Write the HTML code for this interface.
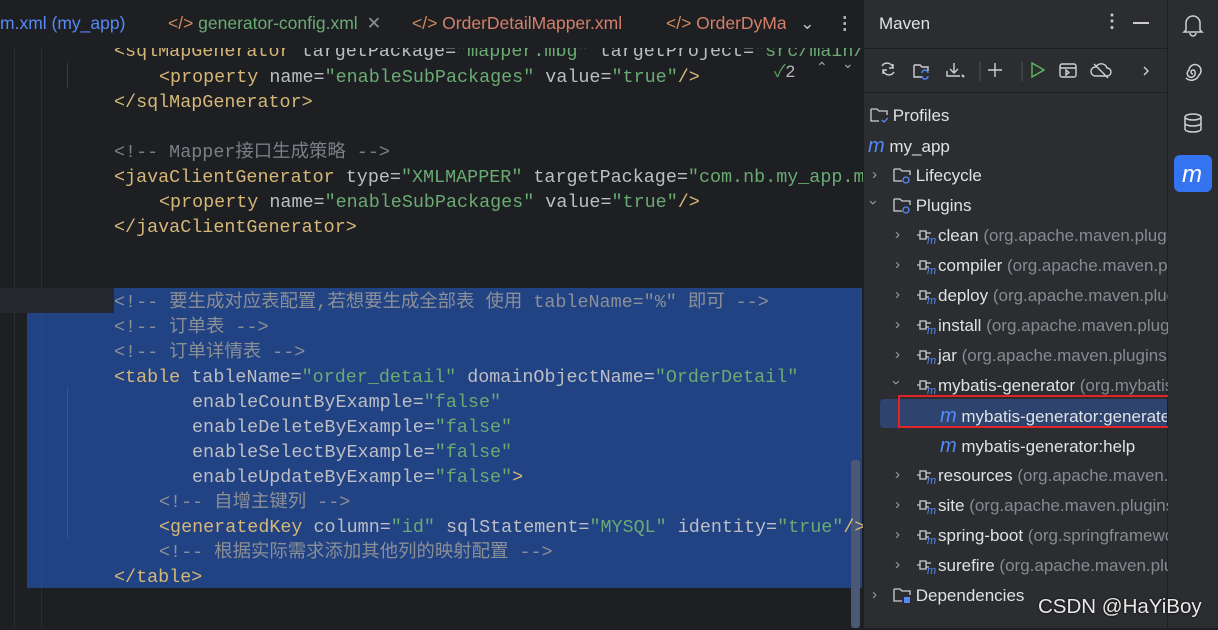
<!DOCTYPE html>
<html><head><meta charset="utf-8"><style>
*{margin:0;padding:0;box-sizing:border-box}
body{width:1218px;height:628px;background:#1e1f22;overflow:hidden;position:relative;font-family:"Liberation Sans","Noto Sans CJK SC",sans-serif}
.abs{position:absolute}
.code{position:absolute;left:0;top:2px;font-family:"Liberation Mono","Noto Sans CJK SC",monospace;font-size:18.4px;white-space:pre;color:#bcbec4}
.ln{position:absolute;height:25px;line-height:25px}
.t{color:#d5b778}.a{color:#bcbec4}.v{color:#6aab73}.c{color:#7a7e85}
.sel .c{color:#8b8f96}
.tab{position:absolute;top:13px;font-size:17.5px}
.tree{position:absolute;font-size:17px;color:#dfe1e5;height:30px;line-height:30px;white-space:nowrap}
.g{color:#868a91}
.chev{position:absolute;color:#9da0a8;font-size:15px}
</style></head><body>
<div class="abs" style="left:0;top:0;width:864px;height:47px;background:#1e1f22;border-bottom:1px solid #393b40"></div>
<div class="tab" style="left:0;color:#548af7">m.xml (my_app)</div>
<div class="tab" style="left:168px;color:#d08c5b">&lt;/&gt; <span style="color:#6aab73">generator-config.xml</span> <span style="color:#8a8d93;margin-left:4px">✕</span></div>
<div class="tab" style="left:412px;color:#d08c5b">&lt;/&gt; <span style="color:#d4806a">OrderDetailMapper.xml</span></div>
<div class="tab" style="left:666px;color:#d08c5b;width:120px;overflow:hidden;white-space:nowrap">&lt;/&gt; <span style="color:#d4806a">OrderDyMapper</span></div>
<div class="tab" style="left:800px;color:#bbb">⌄</div>
<div class="tab" style="left:836px;color:#bbb;font-weight:bold">⋮</div>
<div class="abs" style="left:93px;top:44px;width:145px;height:4px;background:#4e5157;border-radius:2px"></div>
<div class="abs" style="left:14px;top:48px;width:1px;height:580px;background:#2b2d30"></div>
<div class="abs" style="left:41px;top:48px;width:1px;height:580px;background:#2b2d30"></div>
<div class="abs" style="left:0;top:288px;width:114px;height:25px;background:#26282e"></div>
<div class="abs" style="left:114px;top:288px;width:748px;height:25px;background:#214283"></div>
<div class="abs" style="left:27px;top:313px;width:835px;height:275px;background:#214283"></div>
<div class="abs" style="left:41px;top:313px;width:1px;height:275px;background:#2d4a7e"></div>
<div class="abs" style="left:67px;top:388px;width:1px;height:150px;background:#3a5590"></div>
<div class="abs" style="left:851px;top:460px;width:9px;height:168px;background:#4a5876;border-radius:3px"></div>
<div class="abs" style="left:67px;top:63px;width:1px;height:25px;background:#393b40"></div>
<div class="code">
<div class="ln" style="top:37px;left:114px"><span class="t">&lt;sqlMapGenerator </span><span class="a">targetPackage=</span><span class="v">"mapper.mbg"</span> <span class="a">targetProject=</span><span class="v">"src/main/</span></div>
<div class="abs" style="left:0;top:35px;width:864px;height:11px;background:#1e1f22"></div>
<div class="ln" style="top:63px;left:159px"><span class="t">&lt;property </span>name=<span class="v">"enableSubPackages"</span> value=<span class="v">"true"</span><span class="t">/&gt;</span></div>
<div class="ln" style="top:88px;left:114px"><span class="t">&lt;/sqlMapGenerator&gt;</span></div>
<div class="ln" style="top:138px;left:114px"><span class="c">&lt;!-- Mapper接口生成策略 --&gt;</span></div>
<div class="ln" style="top:163px;left:114px"><span class="t">&lt;javaClientGenerator </span>type=<span class="v">"XMLMAPPER"</span> targetPackage=<span class="v">"com.nb.my_app.m</span></div>
<div class="ln" style="top:188px;left:159px"><span class="t">&lt;property </span>name=<span class="v">"enableSubPackages"</span> value=<span class="v">"true"</span><span class="t">/&gt;</span></div>
<div class="ln" style="top:213px;left:114px"><span class="t">&lt;/javaClientGenerator&gt;</span></div>
<div class="sel">
<div class="ln" style="top:288px;left:114px"><span class="c">&lt;!-- 要生成对应表配置,若想要生成全部表 使用 tableName="%" 即可 --&gt;</span></div>
<div class="ln" style="top:313px;left:114px"><span class="c">&lt;!-- 订单表 --&gt;</span></div>
<div class="ln" style="top:338px;left:114px"><span class="c">&lt;!-- 订单详情表 --&gt;</span></div>
<div class="ln" style="top:363px;left:114px"><span class="t">&lt;table </span>tableName=<span class="v">"order_detail"</span> domainObjectName=<span class="v">"OrderDetail"</span></div>
<div class="ln" style="top:388px;left:192px">enableCountByExample=<span class="v">"false"</span></div>
<div class="ln" style="top:413px;left:192px">enableDeleteByExample=<span class="v">"false"</span></div>
<div class="ln" style="top:438px;left:192px">enableSelectByExample=<span class="v">"false"</span></div>
<div class="ln" style="top:463px;left:192px">enableUpdateByExample=<span class="v">"false"</span><span class="t">&gt;</span></div>
<div class="ln" style="top:488px;left:159px"><span class="c">&lt;!-- 自增主键列 --&gt;</span></div>
<div class="ln" style="top:513px;left:159px"><span class="t">&lt;generatedKey </span>column=<span class="v">"id"</span> sqlStatement=<span class="v">"MYSQL"</span> identity=<span class="v">"true"</span><span class="t">/&gt;</span></div>
<div class="ln" style="top:538px;left:159px"><span class="c">&lt;!-- 根据实际需求添加其他列的映射配置 --&gt;</span></div>
<div class="ln" style="top:563px;left:114px"><span class="t">&lt;/table&gt;</span></div>
</div>
</div>
<div class="abs" style="left:774px;top:57px;font-size:17px;color:#5fa05f">✓<span style="color:#bbb">2</span></div>
<div class="abs" style="left:816px;top:59px;font-size:14px;color:#aaa">⌃</div>
<div class="abs" style="left:842px;top:55px;font-size:14px;color:#aaa">⌄</div>
<div class="abs" style="left:863px;top:0;width:355px;height:628px;background:#2b2d30;border-left:1px solid #1e1f22"></div>
<div class="abs" style="left:1167px;top:0;width:1px;height:628px;background:#1e1f22"></div>
<div class="abs" style="left:879px;top:14px;font-size:17px;color:#dfe1e5">Maven</div>
<div class="abs" style="left:1103px;top:11px;font-size:18px;color:#ccc;font-weight:bold">⋮</div>
<div class="abs" style="left:1133px;top:22px;width:16px;height:2px;background:#ccc"></div>
<div class="abs" style="left:864px;top:48px;width:303px;height:1px;background:#1e1f22"></div>
<div class="abs" style="left:864px;top:92px;width:303px;height:1px;background:#1e1f22"></div>
<svg class="abs" style="left:870px;top:56px" width="297" height="30" fill="none" stroke="#ced0d6" stroke-width="1.4">
<path d="M12 10a6 6 0 0 1 11 2M24 16a6 6 0 0 1-11 -2M23 8v4h-4M13 18v-4h4"/>
<path d="M44 9h6l2 2h6v4M44 9v12h8"/><path d="M52 17a3 3 0 0 1 6 0M58 20a3 3 0 0 1 -6 0" stroke="#548af7"/>
<path d="M84 7v10M80 13l4 4 4-4M77 15v5h13"/><path d="M92 19l2 2" stroke-width="2"/>
<line x1="110" y1="5" x2="110" y2="25" stroke="#43454a"/>
<path d="M125 7v14M118 14h14"/>
<line x1="152" y1="5" x2="152" y2="25" stroke="#43454a"/>
<path d="M162 7l12 7-12 7z" stroke="#5fb85f"/>
<rect x="190" y="8" width="16" height="13" rx="2"/><path d="M190 12h16M196 14v5l3-2.5z"/>
<path d="M225 20h12a4 4 0 0 0 0-8a6 6 0 0 0-11-1a4 4 0 0 0-1 9M224 8l14 14"/>
<path d="M274 11l4 4-4 4"/>
</svg>
<svg width="0" height="0" style="position:absolute"><defs>
<g id="fold" fill="none" stroke="#ced0d6" stroke-width="1.3"><path d="M1 3h6l2 2h8v4M1 3v12h8"/></g>
<g id="plug" fill="none" stroke="#ced0d6" stroke-width="1.3"><path d="M4 5h6v8H4zM1 9h3M10 7h5M10 11h3"/></g>
</defs></svg>
<div style="position:absolute;left:0;top:2px;width:1218px;height:628px">
<div class="tree" style="left:870px;top:99px"><svg width="18" height="18" style="vertical-align:-3px"><use href="#fold"/><path d="M12 14l2 2 4-4" stroke="#548af7" fill="none" stroke-width="1.3"/></svg> Profiles</div>
<div class="tree" style="left:868px;top:129px"><span style="color:#548af7;font-style:italic;font-size:20px">m</span> my_app</div>
<div class="chev" style="left:872px;top:164px">›</div>
<div class="tree" style="left:893px;top:159px"><svg width="18" height="18" style="vertical-align:-3px"><use href="#fold"/><circle cx="13" cy="14" r="3" stroke="#548af7" fill="none" stroke-width="1.3"/></svg> Lifecycle</div>
<div class="chev" style="left:871px;top:192px;transform:rotate(90deg)">›</div>
<div class="tree" style="left:893px;top:189px"><svg width="18" height="18" style="vertical-align:-3px"><use href="#fold"/><circle cx="13" cy="14" r="3" stroke="#548af7" fill="none" stroke-width="1.3"/></svg> Plugins</div>
</div>
<div class="abs" style="left:880px;top:399px;width:287px;height:29px;background:#2e436e;border-radius:4px 0 0 4px"></div>
<div class="abs" style="left:898px;top:395px;width:296px;height:33px;border:2px solid #e0242a"></div>
<div style="position:absolute;left:0;top:2px">
<div class="chev" style="left:895px;top:224px">›</div><div class="tree" style="left:916px;top:219px"><svg width="22" height="18" style="vertical-align:-3px"><use href="#plug"/><text x="11" y="18" fill="#548af7" font-size="11" font-style="italic">m</text></svg>clean <span class="g">(org.apache.maven.plugins</span></div>
<div class="chev" style="left:895px;top:254px">›</div><div class="tree" style="left:916px;top:249px"><svg width="22" height="18" style="vertical-align:-3px"><use href="#plug"/><text x="11" y="18" fill="#548af7" font-size="11" font-style="italic">m</text></svg>compiler <span class="g">(org.apache.maven.plugins</span></div>
<div class="chev" style="left:895px;top:284px">›</div><div class="tree" style="left:916px;top:279px"><svg width="22" height="18" style="vertical-align:-3px"><use href="#plug"/><text x="11" y="18" fill="#548af7" font-size="11" font-style="italic">m</text></svg>deploy <span class="g">(org.apache.maven.plugins</span></div>
<div class="chev" style="left:895px;top:314px">›</div><div class="tree" style="left:916px;top:309px"><svg width="22" height="18" style="vertical-align:-3px"><use href="#plug"/><text x="11" y="18" fill="#548af7" font-size="11" font-style="italic">m</text></svg>install <span class="g">(org.apache.maven.plugins</span></div>
<div class="chev" style="left:895px;top:344px">›</div><div class="tree" style="left:916px;top:339px"><svg width="22" height="18" style="vertical-align:-3px"><use href="#plug"/><text x="11" y="18" fill="#548af7" font-size="11" font-style="italic">m</text></svg>jar <span class="g">(org.apache.maven.plugins</span></div>
<div class="chev" style="left:894px;top:372px;transform:rotate(90deg)">›</div><div class="tree" style="left:916px;top:369px"><svg width="22" height="18" style="vertical-align:-3px"><use href="#plug"/><text x="11" y="18" fill="#548af7" font-size="11" font-style="italic">m</text></svg>mybatis-generator <span class="g">(org.mybatis</span></div>
<div class="tree" style="left:940px;top:399px;width:227px;overflow:hidden"><span style="color:#548af7;font-style:italic;font-size:20px">m</span> mybatis-generator:generate</div>
<div class="tree" style="left:940px;top:429px"><span style="color:#548af7;font-style:italic;font-size:20px">m</span> mybatis-generator:help</div>
<div class="chev" style="left:895px;top:464px">›</div><div class="tree" style="left:916px;top:459px"><svg width="22" height="18" style="vertical-align:-3px"><use href="#plug"/><text x="11" y="18" fill="#548af7" font-size="11" font-style="italic">m</text></svg>resources <span class="g">(org.apache.maven.plugins</span></div>
<div class="chev" style="left:895px;top:494px">›</div><div class="tree" style="left:916px;top:489px"><svg width="22" height="18" style="vertical-align:-3px"><use href="#plug"/><text x="11" y="18" fill="#548af7" font-size="11" font-style="italic">m</text></svg>site <span class="g">(org.apache.maven.plugins</span></div>
<div class="chev" style="left:895px;top:524px">›</div><div class="tree" style="left:916px;top:519px"><svg width="22" height="18" style="vertical-align:-3px"><use href="#plug"/><text x="11" y="18" fill="#548af7" font-size="11" font-style="italic">m</text></svg>spring-boot <span class="g">(org.springframework</span></div>
<div class="chev" style="left:895px;top:554px">›</div><div class="tree" style="left:916px;top:549px"><svg width="22" height="18" style="vertical-align:-3px"><use href="#plug"/><text x="11" y="18" fill="#548af7" font-size="11" font-style="italic">m</text></svg>surefire <span class="g">(org.apache.maven.plugins</span></div>
<div class="chev" style="left:872px;top:584px">›</div>
<div class="tree" style="left:893px;top:579px"><svg width="18" height="18" style="vertical-align:-3px"><use href="#fold"/><rect x="11" y="11" width="6" height="6" fill="#548af7"/></svg> Dependencies</div>
</div>
<div class="abs" style="left:1168px;top:0;width:50px;height:628px;background:#2b2d30"></div>
<svg class="abs" style="left:1168px;top:0" width="50" height="200" fill="none" stroke="#ced0d6" stroke-width="1.5">
<path d="M18 30v-7a7 7 0 0 1 14 0v7l2 2H16zM22 33a3 3 0 0 0 6 0"/>
<path d="M25 74a2 2 0 1 1 2-2a4 4 0 1 1-6-2a6 6 0 1 1 10 5a8 8 0 0 1-13 3"/>
<ellipse cx="25" cy="117" rx="8" ry="3"/><path d="M17 117v12c0 4 16 4 16 0v-12M17 123c0 4 16 4 16 0"/>
<rect x="6" y="155" width="38" height="37" rx="6" fill="#3574f0" stroke="none"/>
<text x="14" y="182" fill="#fff" stroke="none" font-size="24" font-style="italic" font-family="Liberation Sans">m</text>
</svg>
<div class="abs" style="left:1038px;top:595px;font-size:20.5px;color:#e8e8e8;text-shadow:0 0 2px #000">CSDN @HaYiBoy</div>
</body></html>
